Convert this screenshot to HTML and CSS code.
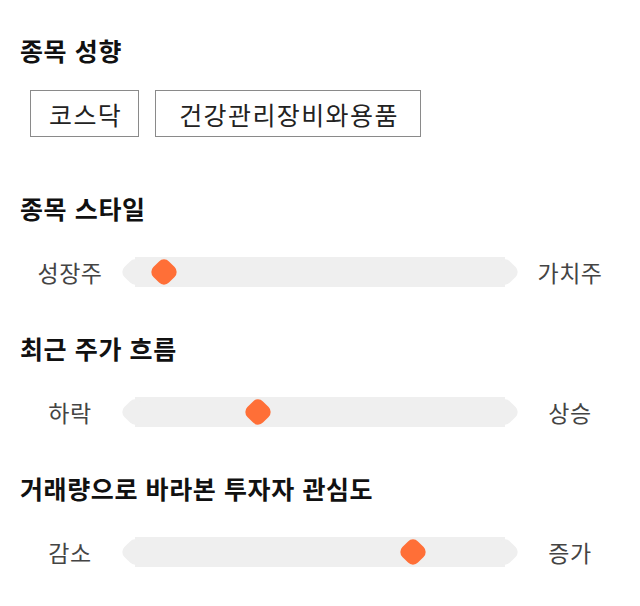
FILE: index.html
```html
<!DOCTYPE html>
<html lang="ko">
<head>
	<meta charset="UTF-8" />
	<title>종목 성향</title>
	<link rel="stylesheet" href="styles.css">
</head>
<body>
	<div class="container">
		<div class="section tendency">
			<h2 class="title">종목 성향</h2>
			<div class="chips">
				<span class="chip">코스닥</span>
				<span class="chip chip-wide">건강관리장비와용품</span>
			</div>
		</div>
		<div class="section">
			<h2 class="title">종목 스타일</h2>
			<div class="slider-row">
				<span class="label">성장주</span>
				<div class="slider">
					<div class="track"></div>
					<div class="thumb" style="left: 11%"></div>
				</div>
				<span class="label">가치주</span>
			</div>
		</div>
		<div class="section">
			<h2 class="title">최근 주가 흐름</h2>
			<div class="slider-row">
				<span class="label">하락</span>
				<div class="slider">
					<div class="track"></div>
					<div class="thumb" style="left: 34.5%"></div>
				</div>
				<span class="label">상승</span>
			</div>
		</div>
		<div class="section">
			<h2 class="title">거래량으로 바라본 투자자 관심도</h2>
			<div class="slider-row">
				<span class="label">감소</span>
				<div class="slider">
					<div class="track"></div>
					<div class="thumb" style="left: 73.2%"></div>
				</div>
				<span class="label">증가</span>
			</div>
		</div>
	</div>
</body>
</html>
```

FILE: styles.css
```css
html,body,div,h2,span {
	margin: 0;
	padding: 0;
}
body {
	background: #fff;
	font-family: "Noto Sans CJK KR", "Noto Sans", sans-serif;
	color: #222;
}
.container {
	padding: 33px 20px 0;
}
.title {
	font-size: 25px;
	line-height: 34px;
	letter-spacing: 0.6px;
	font-weight: bold;
	color: #111;
}
.section {
	margin-bottom: 46px;
}
.tendency {
	margin-bottom: 54px;
}
.chips {
	display: flex;
	gap: 16px;
	margin: 23px 0 0 10px;
}
.chip {
	display: flex;
	align-items: center;
	height: 47px;
	box-sizing: border-box;
	padding: 0 16px 0 18px;
	border: 1px solid #8a8a8a;
	font-size: 25px;
	letter-spacing: 1.4px;
	color: #222;
}
.chip-wide {
	padding: 0 21px 0 23px;
}
.slider-row {
	display: grid;
	grid-template-columns: 100px 400px 100px;
	align-items: center;
	margin-top: 30px;
	height: 30px;
}
.label {
	text-align: center;
	font-size: 23px;
	letter-spacing: 0.5px;
	color: #444;
}
.slider {
	position: relative;
	height: 30px;
}
.track {
	position: relative;
	height: 30px;
	margin: 0 15px;
	background: #efefef;
}
.track::before,
.track::after {
	content: "";
	position: absolute;
	top: 4px;
	width: 22px;
	height: 22px;
	border-radius: 7px;
	background: #efefef;
	transform: rotate(45deg);
}
.track::before {
	left: -11px;
}
.track::after {
	right: -11px;
}
.thumb {
	position: absolute;
	top: 4px;
	width: 22px;
	height: 22px;
	margin-left: -11px;
	border-radius: 7px;
	background: #ff6f37;
	transform: rotate(45deg);
}
```
